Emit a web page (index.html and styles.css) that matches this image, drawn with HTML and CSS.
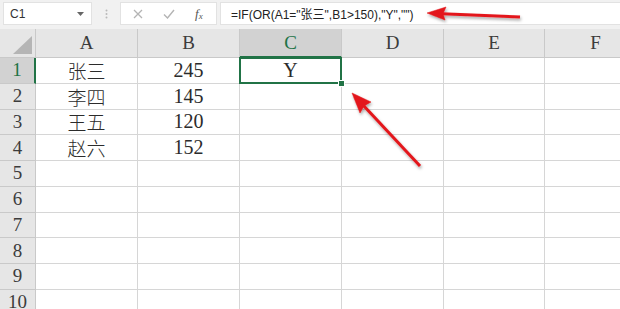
FILE: index.html
```html
<!DOCTYPE html>
<html lang="zh-CN">
<head>
    <meta charset="UTF-8">
    <title>Excel - OR</title>
    <link rel="stylesheet" href="styles.css">
</head>
<body>
    <div class="formula-bar">
        <div class="name-box">
            <span>C1</span>
            <svg width="7" height="4" viewBox="0 0 7 4"><path d="M0 0h7L3.5 4z" fill="#666"/></svg>
        </div>
        <div class="splitter">
            <svg width="3" height="10" viewBox="0 0 3 10"><circle cx="1.5" cy="1.5" r="1" fill="#b9b9b9"/><circle cx="1.5" cy="5" r="1" fill="#b9b9b9"/><circle cx="1.5" cy="8.5" r="1" fill="#b9b9b9"/></svg>
        </div>
        <div class="fx-buttons">
            <svg class="icon" width="10" height="10" viewBox="0 0 10 10"><path d="M1 1l8 8M9 1l-8 8" stroke="#b4b4b4" stroke-width="1.3" fill="none"/></svg>
            <svg class="icon" width="12" height="10" viewBox="0 0 12 10"><path d="M1 5.5l3.5 3.5L11 1" stroke="#b4b4b4" stroke-width="1.4" fill="none"/></svg>
            <span class="fx">f<sub>x</sub></span>
        </div>
        <div class="formula-input">=IF(OR(A1="张三",B1&gt;150),"Y","")</div>
    </div>

    <div class="sheet">
        <div class="cell head corner"><svg width="19" height="18" viewBox="0 0 19 18"><path d="M0 18L19 0v18z" fill="#b5b5b5"/></svg></div>
        <div class="cell head">A</div>
        <div class="cell head">B</div>
        <div class="cell head active-col">C</div>
        <div class="cell head">D</div>
        <div class="cell head">E</div>
        <div class="cell head">F</div>

        <div class="cell head active-row">1</div>
        <div class="cell cjk">张三</div>
        <div class="cell">245</div>
        <div class="cell selected">Y</div>
        <div class="cell"></div>
        <div class="cell"></div>
        <div class="cell"></div>

        <div class="cell head">2</div>
        <div class="cell cjk">李四</div>
        <div class="cell">145</div>
        <div class="cell"></div>
        <div class="cell"></div>
        <div class="cell"></div>
        <div class="cell"></div>

        <div class="cell head">3</div>
        <div class="cell cjk">王五</div>
        <div class="cell">120</div>
        <div class="cell"></div>
        <div class="cell"></div>
        <div class="cell"></div>
        <div class="cell"></div>

        <div class="cell head">4</div>
        <div class="cell cjk">赵六</div>
        <div class="cell">152</div>
        <div class="cell"></div>
        <div class="cell"></div>
        <div class="cell"></div>
        <div class="cell"></div>

        <div class="cell head">5</div>
        <div class="cell"></div>
        <div class="cell"></div>
        <div class="cell"></div>
        <div class="cell"></div>
        <div class="cell"></div>
        <div class="cell"></div>

        <div class="cell head">6</div>
        <div class="cell"></div>
        <div class="cell"></div>
        <div class="cell"></div>
        <div class="cell"></div>
        <div class="cell"></div>
        <div class="cell"></div>

        <div class="cell head">7</div>
        <div class="cell"></div>
        <div class="cell"></div>
        <div class="cell"></div>
        <div class="cell"></div>
        <div class="cell"></div>
        <div class="cell"></div>

        <div class="cell head">8</div>
        <div class="cell"></div>
        <div class="cell"></div>
        <div class="cell"></div>
        <div class="cell"></div>
        <div class="cell"></div>
        <div class="cell"></div>

        <div class="cell head">9</div>
        <div class="cell"></div>
        <div class="cell"></div>
        <div class="cell"></div>
        <div class="cell"></div>
        <div class="cell"></div>
        <div class="cell"></div>

        <div class="cell head">10</div>
        <div class="cell"></div>
        <div class="cell"></div>
        <div class="cell"></div>
        <div class="cell"></div>
        <div class="cell"></div>
        <div class="cell"></div>
    </div>

    <!-- red callout arrows drawn over the sheet -->
    <svg class="arrows" width="620" height="309" viewBox="0 0 620 309">
        <defs>
            <filter id="shadow" x="-20%" y="-50%" width="140%" height="200%">
                <feDropShadow dx="1" dy="2" stdDeviation="1.5" flood-color="#000" flood-opacity="0.35"/>
            </filter>
        </defs>
        <g fill="#e3161b" stroke="#e3161b" filter="url(#shadow)">
            <line x1="520" y1="17" x2="442" y2="13.8" stroke-width="3"/>
            <path d="M427 13 L446 7 L443 13.8 L445 20 Z" stroke-width="0.5"/>
            <line x1="420" y1="166" x2="363" y2="105" stroke-width="3"/>
            <path d="M352 93 L371 102 L364 106 L360 113 Z" stroke-width="0.5"/>
        </g>
    </svg>
</body>
</html>
```

FILE: styles.css
```css
:root {
    --excel-green: #217346;
    --grid-line: #d6d6d6;
    --head-bg: #e6e6e6;
    --head-active: #d2d2d2;
    --bar-bg: #f1f1f1;
}

body {
    margin: 0;
    width: 620px;
    height: 309px;
    overflow: hidden;
    position: relative;
    background-color: #fff;
    font-family: "Liberation Serif", "Noto Sans CJK SC", serif;
}

/* formula bar */
.formula-bar {
    display: flex;
    height: 29px;
    padding: 2px 0 4px 3px;
    box-sizing: border-box;
    background-color: var(--bar-bg);
    font-family: "Liberation Sans", "Noto Sans CJK SC", sans-serif;
}

.name-box {
    width: 89px;
    display: flex;
    align-items: center;
    justify-content: space-between;
    padding: 0 7px 0 6px;
    box-sizing: border-box;
    background-color: #fff;
    border: 1px solid #e2e2e2;
    font-size: 12px;
    color: #333;
}

.splitter {
    width: 28px;
    display: flex;
    align-items: center;
    justify-content: center;
}

.fx-buttons {
    width: 97px;
    display: flex;
    align-items: center;
    gap: 20px;
    padding-left: 12px;
    box-sizing: border-box;
    background-color: #fff;
    border: 1px solid #e2e2e2;
}

.fx {
    font-family: "Liberation Serif", serif;
    font-style: italic;
    font-size: 13px;
    color: #555;
}

.fx sub {
    font-size: 9px;
    vertical-align: -1px;
}

.formula-input {
    flex: 1;
    margin-left: 3px;
    display: flex;
    align-items: center;
    padding-left: 10px;
    background-color: #fff;
    border: 1px solid #e2e2e2;
    border-right: none;
    font-size: 12px;
    color: #222;
}

/* grid */
.sheet {
    display: grid;
    grid-template-columns: 36px 102px 102px 102px 102px 101px 102px;
    grid-template-rows: 29px;
    grid-auto-rows: 25.75px;
}

.cell {
    display: flex;
    align-items: center;
    justify-content: center;
    box-sizing: border-box;
    border-right: 1px solid var(--grid-line);
    border-bottom: 1px solid var(--grid-line);
    font-size: 20px;
    color: #2b2b2b;
}

.cjk {
    font-size: 19px;
    font-weight: 300;
}

.head {
    background-color: var(--head-bg);
    border-right-color: #c9c9c9;
    border-bottom-color: #c9c9c9;
    font-size: 19px;
    color: #3c3c3c;
}

.corner {
    align-items: flex-end;
    justify-content: flex-end;
    padding: 0 3px 3px 0;
}

.active-col {
    background-color: var(--head-active);
    border-bottom: 2px solid var(--excel-green);
    color: var(--excel-green);
}

.active-row {
    background-color: var(--head-active);
    border-right: 2px solid var(--excel-green);
    color: var(--excel-green);
}

.selected {
    position: relative;
}

.selected::after {
    content: "";
    position: absolute;
    top: -1px;
    left: -1px;
    right: -1px;
    bottom: -1px;
    border: 2px solid var(--excel-green);
}

.selected::before {
    content: "";
    position: absolute;
    right: -4px;
    bottom: -4px;
    width: 5px;
    height: 5px;
    background-color: var(--excel-green);
    border: 1px solid #fff;
    z-index: 1;
}

.arrows {
    position: absolute;
    top: 0;
    left: 0;
    pointer-events: none;
}
```
